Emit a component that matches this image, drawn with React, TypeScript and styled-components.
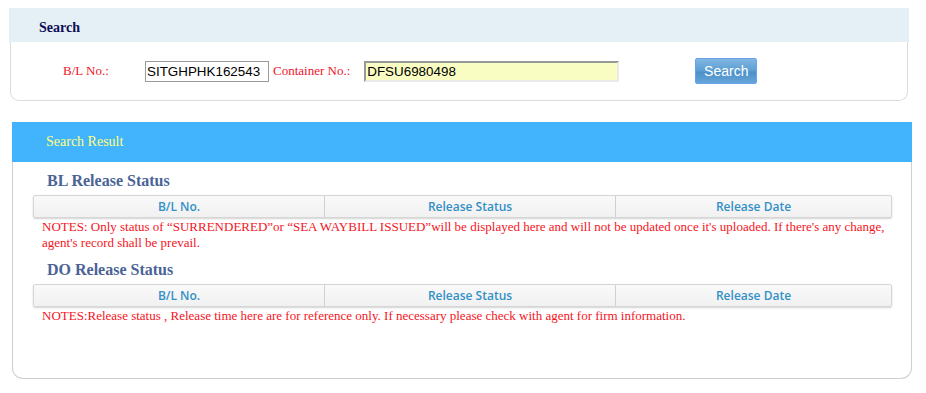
import React from 'react';
import styled, { createGlobalStyle } from 'styled-components';

const GlobalStyle = createGlobalStyle`
  html, body {
    margin: 0;
    padding: 0;
    background: #fff;
    font-family: "Liberation Serif", "Times New Roman", serif;
  }
`;

const Page = styled.div`
  display: flex;
  flex-direction: column;
  padding-top: 8px;
  width: 926px;
`;

const SearchPanel = styled.section`
  margin-left: 9px;
  width: 900px;
  display: flex;
  flex-direction: column;
`;

const SearchHeader = styled.div`
  height: 34px;
  box-sizing: border-box;
  padding: 5px 0 0 30px;
  background: #e5f0f6;
  display: flex;
  align-items: center;
  font-size: 14px;
  font-weight: bold;
  color: #0d0d55;
`;

const SearchBody = styled.div`
  margin: 0 1px;
  height: 59px;
  border: 1px solid #dcdcdc;
  border-top: none;
  border-radius: 0 0 9px 9px;
  display: flex;
  align-items: center;
  padding-left: 52px;
  box-sizing: border-box;
`;

const Label = styled.span<{ $w?: number }>`
  color: #f0142a;
  font-size: 13px;
  width: ${(p) => (p.$w ? `${p.$w}px` : 'auto')};
  flex-shrink: 0;
`;

const TextInput = styled.input<{ $w: number; $yellow?: boolean }>`
  width: ${(p) => p.$w}px;
  height: 21px;
  box-sizing: border-box;
  font-family: "Liberation Sans", Arial, sans-serif;
  font-size: 13.4px;
  color: #000;
  padding: 0 1px;
  outline: none;
  background: ${(p) => (p.$yellow ? '#fafdc2' : '#fff')};
  border: ${(p) => (p.$yellow ? '2px solid' : '1px solid #9a9a9a')};
  border-color: ${(p) => (p.$yellow ? '#999 #eaeaea #eaeaea #999' : '#9a9a9a')};
`;

const SearchButton = styled.button`
  margin-left: 76px;
  width: 62px;
  height: 26px;
  border: 1px solid #6aa0ee;
  border-radius: 2px;
  background: linear-gradient(#80b7e2 0%, #5c9ed2 50%, #4b90c9 55%, #66a6d8 100%);
  color: #fff;
  font-family: "Liberation Sans", Arial, sans-serif;
  font-size: 14px;
  padding: 0;
  cursor: pointer;
`;

const ResultPanel = styled.section`
  margin-top: 21px;
  margin-left: 12px;
  width: 900px;
  display: flex;
  flex-direction: column;
`;

const ResultHeader = styled.div`
  height: 40px;
  background: #42b4fd;
  display: flex;
  align-items: center;
  padding-left: 34px;
  font-size: 14px;
  color: #ffff7a;
`;

const ResultBody = styled.div`
  height: 217px;
  box-sizing: border-box;
  border: 1px solid #cfcfcf;
  border-top: none;
  border-radius: 0 0 11px 11px;
  padding: 0 19px 0 20px;
  display: flex;
  flex-direction: column;
`;

const SectionTitle = styled.h3<{ $top: number }>`
  margin: ${(p) => p.$top}px 0 4px 14px;
  font-size: 16px;
  line-height: 20px;
  font-weight: bold;
  color: #4a6396;
`;

const TableHead = styled.div`
  display: grid;
  grid-template-columns: 291px 291px 1fr;
  height: 23px;
  box-sizing: border-box;
  border: 1px solid #d6d6d6;
  border-radius: 2px;
  background: linear-gradient(#f9f9f9, #f1f1f1);
  box-shadow: 0 1px 2px rgba(0, 0, 0, 0.18);
`;

const HeadCell = styled.div<{ $last?: boolean }>`
  display: flex;
  align-items: center;
  justify-content: center;
  font-family: "Open Sans", "DejaVu Sans", sans-serif;
  font-size: 12px;
  font-weight: 600;
  color: #3290c6;
  border-right: ${(p) => (p.$last ? 'none' : '1px solid #d0d0d0')};
`;

const Notes = styled.p`
  margin: 1px 0 0 9px;
  font-size: 13px;
  line-height: 16px;
  color: #f5141e;
`;

const columns = ['B/L No.', 'Release Status', 'Release Date'];

function StatusTable() {
  return (
    <TableHead>
      {columns.map((c, i) => (
        <HeadCell key={c} $last={i === columns.length - 1}>{c}</HeadCell>
      ))}
    </TableHead>
  );
}

export default function App() {
  return (
    <Page>
      <GlobalStyle />
      <SearchPanel>
        <SearchHeader>Search</SearchHeader>
        <SearchBody>
          <Label $w={82}>B/L No.:</Label>
          <TextInput $w={124} defaultValue="SITGHPHK162543" />
          <Label style={{ margin: '0 14px 0 4px' }}>Container No.:</Label>
          <TextInput $w={255} $yellow defaultValue="DFSU6980498" />
          <SearchButton>Search</SearchButton>
        </SearchBody>
      </SearchPanel>

      <ResultPanel>
        <ResultHeader>Search Result</ResultHeader>
        <ResultBody>
          <SectionTitle $top={9}>BL Release Status</SectionTitle>
          <StatusTable />
          <Notes>
            NOTES: Only status of “SURRENDERED”or “SEA WAYBILL ISSUED”will be displayed here and will not be updated once it's uploaded. If there's any change, agent's record shall be prevail.
          </Notes>
          <SectionTitle $top={9}>DO Release Status</SectionTitle>
          <StatusTable />
          <Notes>
            NOTES:Release status , Release time here are for reference only. If necessary please check with agent for firm information.
          </Notes>
        </ResultBody>
      </ResultPanel>
    </Page>
  );
}
